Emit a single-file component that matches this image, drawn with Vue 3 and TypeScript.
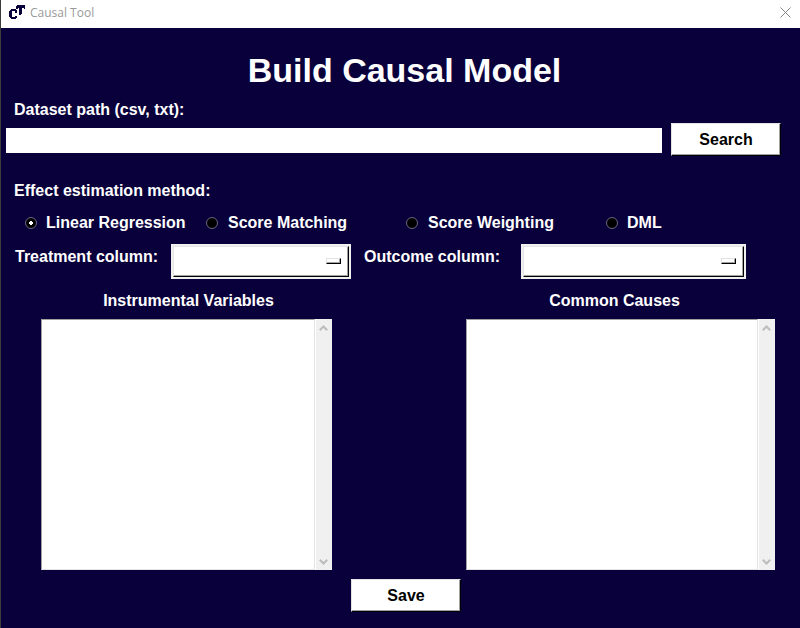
<script setup lang="ts">
import { ref } from 'vue'

const path = ref('')
const methods = ['Linear Regression', 'Score Matching', 'Score Weighting', 'DML']
const selected = ref('Linear Regression')
const lists = [
  { title: 'Instrumental Variables', cls: 'instruments' },
  { title: 'Common Causes', cls: 'causes' },
]
</script>

<template>
  <div class="window">
    <header class="titlebar">
      <svg class="logo" width="17" height="16" viewBox="0 0 17 16" shape-rendering="crispEdges">
        <path d="M2 4h5v1h1v3H6V6H3v6h3v-1h2v2H7v1H2v-1H1v-1H0V6h1V5h1z" />
        <path d="M8 0h8v4h-1V3h-2v6h-1v1h-2V3H9v1H7V1h1z" />
      </svg>
      <span class="caption">Causal Tool</span>
      <svg class="close" width="11" height="11" viewBox="0 0 11 11">
        <path d="M.5 .5l10 10M10.5 .5l-10 10" fill="none" stroke="#858585" stroke-width="1" />
      </svg>
    </header>

    <main class="content">
      <h1>Build Causal Model</h1>

      <label class="path-label" for="path">Dataset path (csv, txt):</label>
      <div class="path-row">
        <input id="path" v-model="path" type="text" class="entry" />
        <button class="button" type="button">Search</button>
      </div>

      <p class="method-label">Effect estimation method:</p>
      <div class="methods">
        <div v-for="m in methods" :key="m" class="method" @click="selected = m">
          <svg width="12" height="12" viewBox="0 0 12 12">
            <circle cx="6" cy="6" r="5.5" fill="#000" stroke="#77708e" stroke-width=".9" />
            <path v-if="selected === m" d="M5 4h2v1h1v2H7v1H5V7H4V5h1z" fill="#fff" />
          </svg>
          <span>{{ m }}</span>
        </div>
      </div>

      <div class="columns">
        <span class="treatment-label">Treatment column:</span>
        <div class="option treatment"><div class="face"><i class="indicator"></i></div></div>
        <span class="outcome-label">Outcome column:</span>
        <div class="option outcome"><div class="face"><i class="indicator"></i></div></div>
      </div>

      <div class="lists">
        <section v-for="l in lists" :key="l.title" :class="l.cls">
          <h2>{{ l.title }}</h2>
          <div class="list">
            <div class="listbox"></div>
            <div class="scrollbar">
              <svg width="9" height="6" viewBox="0 0 9 6"><path d="M.8 5.2L4.5 1.5l3.7 3.7" /></svg>
              <svg width="9" height="6" viewBox="0 0 9 6"><path d="M.8 .8l3.7 3.7L8.2 .8" /></svg>
            </div>
          </div>
        </section>
      </div>

      <button class="button save" type="button">Save</button>
    </main>
  </div>
</template>

<style>
body {
  margin: 0;
}
</style>

<style scoped>
.window {
  box-sizing: border-box;
  width: 800px;
  height: 628px;
  overflow: hidden;
  display: flex;
  flex-direction: column;
  border-left: 1px solid #3c3c3c;
  background: #09003b;
  color: #fff;
  font: bold 16px/18px "Liberation Sans", Arial, sans-serif;
}
.titlebar {
  box-sizing: border-box;
  height: 28px;
  flex: none;
  display: flex;
  align-items: flex-start;
  padding: 5px 9px 0 8px;
  background: #fff;
}
.logo {
  fill: #09003b;
}
.caption {
  margin: -1px auto 0 4px;
  color: #999;
  font: 12px/18px "Open Sans", "Noto Sans", sans-serif;
}
.close {
  margin-top: 2px;
}
.content {
  flex: 1;
  display: flex;
  flex-direction: column;
}
h1 {
  margin: 22px 0 0 8px;
  text-align: center;
  font-size: 34px;
  line-height: 40px;
}
.path-label {
  margin: 11px 0 0 13px;
}
.path-row {
  display: flex;
  align-items: flex-start;
  margin: 4px 0 0 5px;
}
.entry {
  box-sizing: border-box;
  width: 656px;
  height: 25px;
  margin: 5px 9px 0 0;
  padding: 0 3px;
  border: 0;
  border-radius: 0;
  background: #fff;
  font: inherit;
  outline: 0;
}
.button {
  box-sizing: border-box;
  width: 110px;
  height: 33px;
  padding: 0;
  border: 1px solid;
  border-color: #e3e3e3 #000 #000 #e3e3e3;
  border-radius: 0;
  background: #fff;
  box-shadow: inset -1px -1px #a0a0a0;
  color: #000;
  font: inherit;
}
.method-label {
  margin: 26px 0 0 13px;
}
.methods {
  display: grid;
  grid-template-columns: 181px 200px 200px 100px;
  margin: 14px 0 0 24px;
}
.method {
  display: flex;
  align-items: center;
  gap: 10px;
}
.method:first-child,
.method:last-child {
  gap: 9px;
}
.columns {
  display: flex;
  margin: 12px 0 0 14px;
}
.treatment-label,
.outcome-label {
  margin-top: 4px;
}
.treatment-label {
  width: 156px;
}
.outcome-label {
  width: 157px;
  margin-left: 13px;
}
.option {
  box-sizing: border-box;
  height: 35px;
  padding: 2px;
  background: #f0f0f0;
}
.treatment {
  width: 180px;
}
.outcome {
  width: 225px;
}
.face {
  box-sizing: border-box;
  height: 31px;
  display: flex;
  justify-content: flex-end;
  padding: 11px 7px 0 0;
  border: 1px solid;
  border-color: #e3e3e3 #000 #000 #e3e3e3;
  background: #fff;
  box-shadow: inset -1px -1px #a0a0a0;
}
.indicator {
  box-sizing: border-box;
  width: 15px;
  height: 6px;
  border: 1px solid;
  border-color: #e3e3e3 #000 #000 #e3e3e3;
  box-shadow: inset -1px -1px #a0a0a0;
}
.lists {
  display: flex;
  gap: 134px;
  margin: 13px 0 0 40px;
}
.instruments {
  width: 291px;
}
.causes {
  width: 309px;
}
h2 {
  margin: 0 0 9px;
  padding-left: 4px;
  text-align: center;
  font-size: 16px;
  line-height: 18px;
}
.causes h2 {
  padding: 0 12px 0 0;
}
.list {
  display: flex;
  height: 251px;
}
.listbox {
  box-sizing: border-box;
  flex: 1;
  margin-right: 1px;
  border: 1px solid;
  border-color: #a0a0a0 #e3e3e3 #e3e3e3 #a0a0a0;
  background: #fff;
}
.list {
  background: #fff;
}
.scrollbar {
  box-sizing: border-box;
  width: 16px;
  display: flex;
  flex-direction: column;
  align-items: center;
  justify-content: space-between;
  padding: 6px 1px 5px 0;
  background: #f0f0f0;
}
.scrollbar path {
  fill: none;
  stroke: #bcbcbc;
  stroke-width: 2;
}
.save {
  margin: 9px 0 0 350px;
}
</style>
